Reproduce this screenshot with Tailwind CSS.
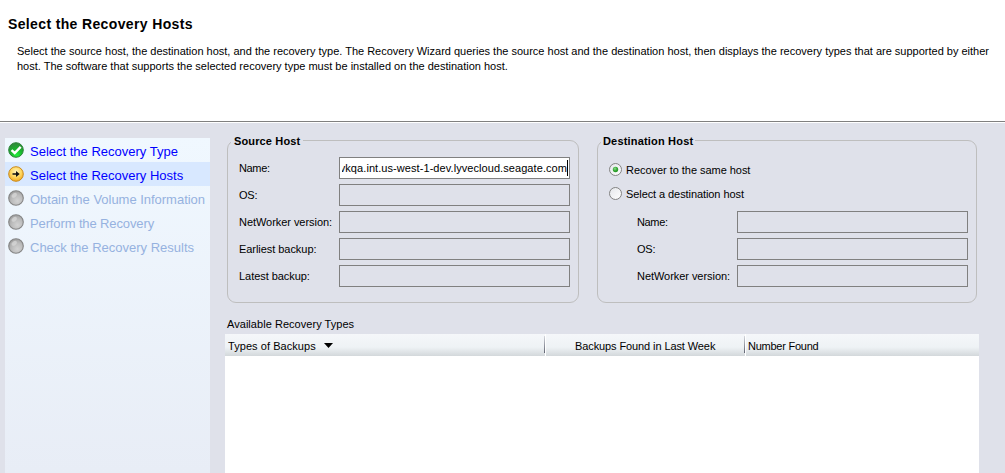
<!DOCTYPE html>
<html lang="en">
<head>
<meta charset="utf-8">
<title>Recovery Wizard</title>
<script src="https://cdn.jsdelivr.net/npm/@tailwindcss/browser@4"></script>
</head>
<body class="w-[1005px] h-[473px] overflow-hidden bg-[#dfe1ea] font-['Liberation_Sans',Arial,sans-serif] text-[11px] leading-[15px] text-black whitespace-nowrap">
<svg class="absolute size-0">
  <defs>
    <radialGradient id="green" cx=".55" cy=".85" r=".8"><stop offset="0" stop-color="#22f03c"/><stop offset=".5" stop-color="#18b52c"/><stop offset="1" stop-color="#2f8a3c"/></radialGradient>
    <radialGradient id="amber" cx=".5" cy=".35" r=".65"><stop offset="0" stop-color="#fff3bd"/><stop offset=".55" stop-color="#ffd860"/><stop offset="1" stop-color="#f3a81f"/></radialGradient>
    <radialGradient id="gray" cx=".6" cy=".7" r=".65"><stop offset="0" stop-color="#d2d2d2"/><stop offset=".6" stop-color="#bcbcbc"/><stop offset="1" stop-color="#a4a4a4"/></radialGradient>
    <radialGradient id="dot" cx=".4" cy=".35" r=".65"><stop offset="0" stop-color="#8fdc8f"/><stop offset=".6" stop-color="#35a835"/><stop offset="1" stop-color="#239423"/></radialGradient>
    <linearGradient id="face" x1="0" y1="0" x2="1" y2="1"><stop offset="0" stop-color="#e4e6ea"/><stop offset="1" stop-color="#ffffff"/></linearGradient>
    <symbol id="pending" viewBox="0 0 16 16"><circle cx="8" cy="8" r="7.3" fill="url(#gray)" stroke="#858585" stroke-width="1.1"/><ellipse cx="6.200" cy="5.300" rx="3" ry="2" fill="#dadada" fill-opacity=".7" transform="rotate(-35 6.200 5.300)"/></symbol>
  </defs>
</svg>
<div class="h-screen flex flex-col">
  <header class="h-[122px] shrink-0 bg-white border-b border-[#808080] pt-[15px] pl-2">
    <h1 class="text-[14px] leading-[18px] font-bold tracking-[0.36px]">Select the Recovery Hosts</h1>
    <p class="mt-[11px] pl-[9px]">Select the source host, the destination host, and the recovery type. The Recovery Wizard queries the source host and the destination host, then displays the recovery types that are supported by either<br>host. The software that supports the selected recovery type must be installed on the destination host.</p>
  </header>
  <main class="flex-1 min-h-0 flex border-t border-white pt-[15px] pl-[5px]">
    <nav class="w-[205px] shrink-0 bg-gradient-to-b from-[#f0f8ff] to-[#e8edf6] text-[13px] leading-[28px] text-[#96b2e0]">
      <div class="h-6 flex pl-[3px] gap-[6px] text-[#0000ff]">
        <svg class="size-4 mt-1" viewBox="0 0 16 16"><circle cx="8" cy="8" r="7.3" fill="url(#green)" stroke="#2c8438" stroke-width="1"/><path d="M3.5 8.2 6.7 11 12.7 4.8" fill="none" stroke="#fff" stroke-width="2.4"/></svg>
        <span>Select the Recovery Type</span>
      </div>
      <div class="h-6 flex pl-[3px] gap-[6px] bg-[#d8e8ff] text-[#0000ff]">
        <svg class="size-4 mt-1" viewBox="0 0 16 16"><circle cx="8" cy="8" r="7.3" fill="url(#amber)" stroke="#c98a1c" stroke-width="1"/><path d="M4.5 7.2H8V5l3.7 3L8 11V8.8H4.5z" fill="#111"/></svg>
        <span>Select the Recovery Hosts</span>
      </div>
      <div class="h-6 flex pl-[3px] gap-[6px]"><svg class="size-4 mt-1"><use href="#pending"/></svg><span class="tracking-[-0.02px]">Obtain the Volume Information</span></div>
      <div class="h-6 flex pl-[3px] gap-[6px]"><svg class="size-4 mt-1"><use href="#pending"/></svg><span class="tracking-[-0.12px]">Perform the Recovery</span></div>
      <div class="h-6 flex pl-[3px] gap-[6px]"><svg class="size-4 mt-1"><use href="#pending"/></svg><span>Check the Recovery Results</span></div>
    </nav>
    <section class="ml-[15px] w-[754px] flex flex-col">
      <div class="flex gap-[18px] pl-[2px] pt-[2px]">
        <div class="w-[352px] h-[163px] border border-[#bebebe] rounded-[9px] pl-[3px]">
          <h2 class="w-fit h-[15px] -mt-[7px] px-[3px] bg-[#dfe1ea] font-bold tracking-[0.14px]">Source Host</h2>
          <div class="mt-[8px] pl-2 grid grid-cols-[100px_231px] gap-y-[5px] leading-[22px]">
            <span class="tracking-[-0.35px]">Name:</span><div class="h-[22px] border border-[#808080] bg-white flex pl-[2px] pr-px"><div class="flex-1 min-w-0 h-full overflow-hidden flex justify-end leading-[20px] tracking-[0.07px]"><span>vkqa.int.us-west-1-dev.lyvecloud.seagate.com</span></div><i class="w-px h-4 mt-[2px] bg-black"></i></div>
            <span class="tracking-[-0.2px]">OS:</span><div class="h-[22px] border border-[#808080]"></div>
            <span class="tracking-[-0.05px]">NetWorker version:</span><div class="h-[22px] border border-[#808080]"></div>
            <span class="tracking-[-0.05px]">Earliest backup:</span><div class="h-[22px] border border-[#808080]"></div>
            <span class="tracking-[-0.05px]">Latest backup:</span><div class="h-[22px] border border-[#808080]"></div>
          </div>
        </div>
        <div class="w-[380px] h-[163px] border border-[#bebebe] rounded-[9px] pl-[3px]">
          <h2 class="w-fit h-[15px] -mt-[7px] px-[2px] bg-[#dfe1ea] font-bold tracking-[0.18px]">Destination Host</h2>
          <div class="mt-[8px] pl-[7px] leading-6">
            <div class="h-6 flex gap-1"><svg class="w-[14px] h-[14px] mt-[5px]" viewBox="0 0 14 14"><circle cx="7.500" cy="7.500" r="6" fill="url(#face)" stroke="#828282"/><circle cx="7.500" cy="7.500" r="2.700" fill="url(#dot)"/></svg><span class="pt-px tracking-[-0.04px]">Recover to the same host</span></div>
            <div class="h-6 flex gap-1"><svg class="w-[14px] h-[14px] mt-[5px]" viewBox="0 0 14 14"><circle cx="7.500" cy="7.500" r="6" fill="url(#face)" stroke="#828282"/></svg><span class="pt-px tracking-[-0.08px]">Select a destination host</span></div>
          </div>
          <div class="mt-[6px] pl-9 grid grid-cols-[100px_231px] gap-y-[5px] leading-[22px]">
            <span class="tracking-[-0.35px]">Name:</span><div class="h-[22px] border border-[#808080]"></div>
            <span class="tracking-[-0.2px]">OS:</span><div class="h-[22px] border border-[#808080]"></div>
            <span class="tracking-[-0.05px]">NetWorker version:</span><div class="h-[22px] border border-[#808080]"></div>
          </div>
        </div>
      </div>
      <h3 class="mt-[14px] pl-[2px] h-[17px] tracking-[0.04px]">Available Recovery Types</h3>
      <div class="h-[22px] shrink-0 bg-gradient-to-b from-[#f5f7fa] via-[#eef2f5] via-60% to-[#d3d8db] flex leading-6">
        <div class="w-[321px] pl-[3px] flex border-r border-white"><span class="tracking-[0.06px]">Types of Backups</span><svg class="ml-[8px] mt-[9px] w-[9px] h-[5px]" viewBox="0 0 9 5"><path d="M0 0h9L4.500 5z"/></svg><i class="ml-auto mt-[2px] w-px h-[17px] bg-gradient-to-b from-[#d5d8de] to-[#606472]"></i></div>
        <div class="w-[200px] pl-[29px] flex border-r border-white"><span class="tracking-[-0.1px]">Backups Found in Last Week</span><i class="ml-auto mt-[2px] w-px h-[17px] bg-gradient-to-b from-[#d5d8de] to-[#606472]"></i></div>
        <div class="pl-[2px] tracking-[-0.25px]">Number Found</div>
      </div>
      <div class="flex-1 bg-white"></div>
    </section>
  </main>
</div>
</body>
</html>
